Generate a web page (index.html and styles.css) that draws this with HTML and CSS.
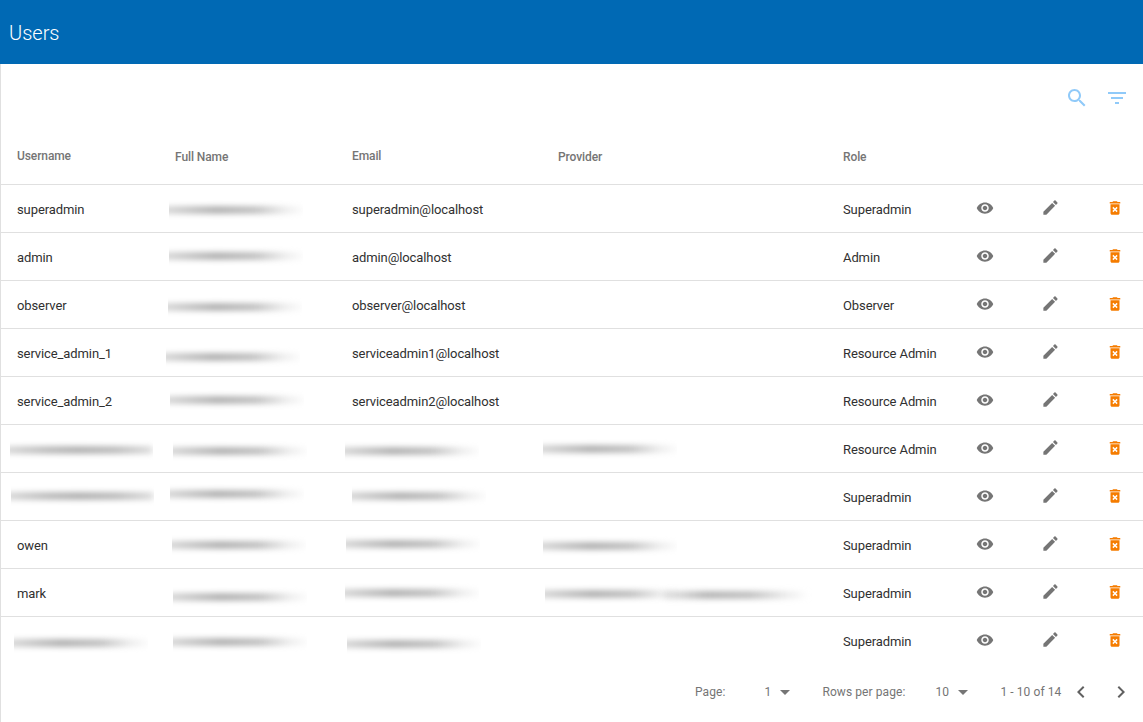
FILE: index.html
```html
<!DOCTYPE html>
<html lang="en">
<head>
<meta charset="utf-8">
<title>Users</title>
<link rel="stylesheet" href="styles.css">
</head>
<body>
<svg class="sprites" aria-hidden="true">
  <symbol id="i-search" viewBox="0 0 24 24"><path d="M15.5 14h-.79l-.28-.27C15.41 12.59 16 11.11 16 9.5 16 5.91 13.09 3 9.5 3S3 5.91 3 9.5 5.91 16 9.5 16c1.61 0 3.09-.59 4.23-1.57l.27.28v.79l5 4.99L20.49 19l-4.99-5zm-6 0C7.01 14 5 11.99 5 9.5S7.01 5 9.5 5 14 7.01 14 9.5 11.99 14 9.5 14z"/></symbol>
  <symbol id="i-filter" viewBox="0 0 24 24"><path d="M10 18h4v-2h-4v2zM3 6v2h18V6H3zm3 7h12v-2H6v2z"/></symbol>
  <symbol id="i-eye" viewBox="0 0 24 24"><path d="M12 4.5C7 4.5 2.73 7.61 1 12c1.73 4.39 6 7.5 11 7.5s9.27-3.11 11-7.5c-1.73-4.39-6-7.5-11-7.5zM12 17c-2.76 0-5-2.24-5-5s2.24-5 5-5 5 2.24 5 5-2.24 5-5 5zm0-8c-1.66 0-3 1.34-3 3s1.34 3 3 3 3-1.34 3-3-1.34-3-3-3z"/></symbol>
  <symbol id="i-edit" viewBox="0 0 24 24"><path d="M3 17.25V21h3.75L17.81 9.94l-3.75-3.75L3 17.25zM20.71 7.04c.39-.39.39-1.02 0-1.41l-2.34-2.34c-.39-.39-1.02-.39-1.41 0l-1.83 1.83 3.75 3.75 1.83-1.83z"/></symbol>
  <symbol id="i-delete" viewBox="0 0 24 24"><path d="M6 19c0 1.1.9 2 2 2h8c1.1 0 2-.9 2-2V7H6v12zm2.46-7.12l1.41-1.41L12 12.59l2.12-2.12 1.41 1.41L13.41 14l2.12 2.12-1.41 1.41L12 15.41l-2.12 2.12-1.41-1.41L10.59 14l-2.13-2.12zM15.5 4l-1-1h-5l-1 1H5v2h14V4z"/></symbol>
  <symbol id="i-arrow" viewBox="0 0 24 24"><path d="M7 10l5 5 5-5z"/></symbol>
  <symbol id="i-prev" viewBox="0 0 24 24"><path d="M15.41 7.41L14 6l-6 6 6 6 1.41-1.41L10.83 12z"/></symbol>
  <symbol id="i-next" viewBox="0 0 24 24"><path d="M10 6L8.59 7.41 13.17 12l-4.58 4.59L10 18l6-6z"/></symbol>
</svg>

<header class="appbar"><h1 class="appbar-title">Users</h1></header>

<main class="content">
  <div class="toolbar">
    <svg class="icon-24 tool"><use href="#i-search"/></svg>
    <svg class="icon-24 tool"><use href="#i-filter"/></svg>
  </div>

  <div class="row head">
    <div class="up1">Username</div><div>Full Name</div><div class="up1">Email</div><div>Provider</div><div>Role</div>
  </div>

  <div class="row">
    <div>superadmin</div><div><span class="smudge fade x-6"></span></div><div>superadmin@localhost</div><div></div><div>Superadmin</div>
    <svg class="eye"><use href="#i-eye"/></svg><svg class="edit"><use href="#i-edit"/></svg><svg class="del"><use href="#i-delete"/></svg>
  </div>
  <div class="row">
    <div>admin</div><div><span class="smudge fade x-6 y-n2"></span></div><div>admin@localhost</div><div></div><div>Admin</div>
    <svg class="eye"><use href="#i-eye"/></svg><svg class="edit"><use href="#i-edit"/></svg><svg class="del"><use href="#i-delete"/></svg>
  </div>
  <div class="row">
    <div>observer</div><div><span class="smudge fade x-7 y-p1"></span></div><div>observer@localhost</div><div></div><div>Observer</div>
    <svg class="eye"><use href="#i-eye"/></svg><svg class="edit"><use href="#i-edit"/></svg><svg class="del"><use href="#i-delete"/></svg>
  </div>
  <div class="row">
    <div>service_admin_1</div><div><span class="smudge fade x-9 y-p3"></span></div><div>serviceadmin1@localhost</div><div></div><div>Resource Admin</div>
    <svg class="eye"><use href="#i-eye"/></svg><svg class="edit"><use href="#i-edit"/></svg><svg class="del"><use href="#i-delete"/></svg>
  </div>
  <div class="row">
    <div>service_admin_2</div><div><span class="smudge fade x-5 y-n2"></span></div><div>serviceadmin2@localhost</div><div></div><div>Resource Admin</div>
    <svg class="eye"><use href="#i-eye"/></svg><svg class="edit"><use href="#i-edit"/></svg><svg class="del"><use href="#i-delete"/></svg>
  </div>
  <div class="row">
    <div><span class="smudge long x-7"></span></div><div><span class="smudge fade x-2 y-p1"></span></div><div><span class="smudge fade x-7 y-p1"></span></div><div><span class="smudge fade x-15 y-n1"></span></div><div>Resource Admin</div>
    <svg class="eye"><use href="#i-eye"/></svg><svg class="edit"><use href="#i-edit"/></svg><svg class="del"><use href="#i-delete"/></svg>
  </div>
  <div class="row">
    <div><span class="smudge long x-6 y-n2"></span></div><div><span class="smudge fade x-5 y-n4"></span></div><div><span class="smudge fade y-n2"></span></div><div></div><div>Superadmin</div>
    <svg class="eye"><use href="#i-eye"/></svg><svg class="edit"><use href="#i-edit"/></svg><svg class="del"><use href="#i-delete"/></svg>
  </div>
  <div class="row">
    <div>owen</div><div><span class="smudge fade x-3 y-n1"></span></div><div><span class="smudge fade x-6 y-n2"></span></div><div><span class="smudge fade x-15"></span></div><div>Superadmin</div>
    <svg class="eye"><use href="#i-eye"/></svg><svg class="edit"><use href="#i-edit"/></svg><svg class="del"><use href="#i-delete"/></svg>
  </div>
  <div class="row">
    <div>mark</div><div><span class="smudge fade x-2 y-p3"></span></div><div><span class="smudge fade x-7 y-n1"></span></div><div class="pair"><span class="smudge fade x-13"></span><span class="smudge fade tail"></span></div><div>Superadmin</div>
    <svg class="eye"><use href="#i-eye"/></svg><svg class="edit"><use href="#i-edit"/></svg><svg class="del"><use href="#i-delete"/></svg>
  </div>
  <div class="row last">
    <div><span class="smudge fade x-3 y-p1"></span></div><div><span class="smudge fade x-2"></span></div><div><span class="smudge fade x-5 y-p2"></span></div><div></div><div>Superadmin</div>
    <svg class="eye"><use href="#i-eye"/></svg><svg class="edit"><use href="#i-edit"/></svg><svg class="del"><use href="#i-delete"/></svg>
  </div>

  <footer class="pager">
    <span class="pager-label">Page:</span>
    <span class="pager-select page-select"><span>1</span><svg class="icon-24"><use href="#i-arrow"/></svg></span>
    <span class="pager-label">Rows per page:</span>
    <span class="pager-select rows-select"><span>10</span><svg class="icon-24"><use href="#i-arrow"/></svg></span>
    <span class="pager-range">1 - 10 of 14</span>
    <span class="pager-nav"><svg class="icon-24"><use href="#i-prev"/></svg><svg class="icon-24"><use href="#i-next"/></svg></span>
  </footer>
</main>
</body>
</html>
```
FILE: styles.css
```css
* { box-sizing: border-box; }

html, body {
  margin: 0;
  height: 100%;
  overflow: hidden;
  background: #fff;
  font-family: Roboto, "Liberation Sans", sans-serif;
}

.sprites { display: none; }

.appbar {
  height: 64px;
  background: #0069b4;
  display: flex;
  align-items: center;
  padding: 2px 0 0 9px;
}

.appbar-title {
  margin: 0;
  font-size: 20px;
  font-weight: 300;
  color: #fff;
}

.content {
  height: 658px;
  border-left: 1px solid #e0e0e0;
}

.toolbar {
  height: 56px;
  display: flex;
  justify-content: flex-end;
  align-items: center;
  gap: 16px;
  padding: 12px 14px 0 0;
}

.icon-24 { width: 24px; height: 24px; flex: none; }

.tool { fill: #90caf9; }

.row {
  display: grid;
  grid-template-columns: 158px 177px 206px 285px 130px 65px 65px 24px;
  align-items: center;
  justify-items: start;
  height: 48px;
  padding: 2px 0 0 16px;
  border-bottom: 1px solid #e0e0e0;
  font-size: 13px;
  letter-spacing: -0.1px;
  color: #303030;
}

.row.last {
  border-bottom: 0;
  padding-bottom: 1px;
}

.row.head {
  height: 65px;
  padding-top: 10px;
  font-size: 12px;
  font-weight: 500;
  color: #757575;
}

.up1 { margin-bottom: 2px; }

.eye, .edit, .del {
  margin-top: -4px;
}

.eye { fill: #757575; width: 18px; height: 18px; margin-left: 3px; }
.edit { fill: #757575; width: 19px; height: 19px; margin-left: 2.5px; }
.del { fill: #f57c00; width: 18px; height: 18px; margin-left: 3px; }

/* blurred-out personal data */
.smudge {
  display: block;
  position: relative;
  width: 134px;
  height: 20px;
  overflow: hidden;
}

.smudge::before {
  content: "";
  position: absolute;
  top: 7px;
  height: 6px;
  border-radius: 3px;
  filter: blur(3px);
}

.smudge.fade::before {
  left: -8px;
  right: -4px;
  background: linear-gradient(90deg, #d0d0d0 0%, #9a9a9a 38%, #aeaeae 65%, rgba(215, 215, 215, 0.6) 85%, transparent 100%);
}

.smudge.long { width: 143px; }

.smudge.long::before {
  left: -8px;
  right: 0;
  background: linear-gradient(90deg, #d0d0d0 0%, #a8a8a8 30%, #9a9a9a 50%, #a8a8a8 75%, #d4d4d4 100%);
}

.pair { display: flex; }

.pair .tail {
  margin-left: -16px;
  width: 142px;
  transform: translateY(1px);
  overflow: visible;
}

.pair .tail::before {
  left: 0;
  background: linear-gradient(90deg, rgba(200, 200, 200, 0.5) 0%, #9e9e9e 30%, #aeaeae 60%, rgba(215, 215, 215, 0.6) 85%, transparent 100%);
}

.x-2 { margin-left: -2px; }
.x-3 { margin-left: -3px; }
.x-5 { margin-left: -5px; }
.x-6 { margin-left: -6px; }
.x-7 { margin-left: -7px; }
.x-9 { margin-left: -9px; }
.x-13 { margin-left: -13px; }
.x-15 { margin-left: -15px; }

.y-n4 { transform: translateY(-4px); }
.y-n2 { transform: translateY(-2px); }
.y-n1 { transform: translateY(-1px); }
.y-p1 { transform: translateY(1px); }
.y-p2 { transform: translateY(2px); }
.y-p3 { transform: translateY(3px); }

.pager {
  height: 54px;
  display: flex;
  align-items: center;
  padding-left: 694px;
  font-size: 12px;
  color: #757575;
  letter-spacing: 0.08px;
}

.pager-select { display: flex; align-items: center; fill: #757575; }
.page-select { margin-left: 39px; width: 58px; gap: 2px; }
.rows-select { margin-left: 30px; width: 65px; gap: 2px; }

.pager-nav { display: flex; gap: 16px; margin-left: 8px; fill: #616161; }
```
